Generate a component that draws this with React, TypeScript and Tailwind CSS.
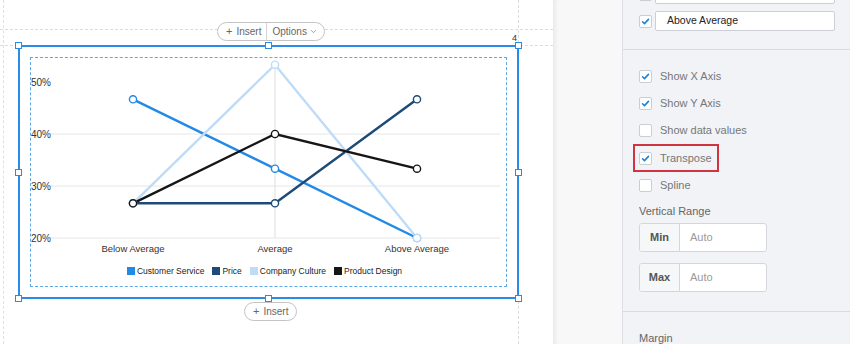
import React from 'react';
import { ChevronDown } from 'lucide-react';

const FONT = { fontFamily: '"Liberation Sans", Arial, sans-serif' };

const XS = [102, 244, 386];
const toY = (v: number) => 180 - (v - 20) * 5.2;

const SERIES = [
  { name: 'Customer Service', color: '#2389e6', values: [46.67, 33.33, 20] },
  { name: 'Price', color: '#1d4a76', values: [26.67, 26.67, 46.67] },
  { name: 'Company Culture', color: '#bedcf8', values: [26.67, 53.33, 20] },
  { name: 'Product Design', color: '#161616', values: [26.67, 40, 33.33] },
];

function Check() {
  return (
    <svg width="13" height="13" viewBox="0 0 13 13">
      <path d="M3 6.8 L5.3 9 L10 4" fill="none" stroke="#1b7fd6" strokeWidth="1.8" strokeLinecap="round" strokeLinejoin="round" />
    </svg>
  );
}

function Checkbox({ checked }: { checked?: boolean }) {
  return (
    <div className="w-[13px] h-[13px] shrink-0 rounded-[2px] border border-[#c9ced5] bg-white flex items-center justify-center">
      {checked && <Check />}
    </div>
  );
}

function Handle({ className }: { className: string }) {
  return <div className={`absolute w-[7px] h-[7px] bg-white border border-[#2a8be8] ${className}`} />;
}

function Chart() {
  return (
    <svg width="474" height="206" className="block">
      {[76, 128, 180].map((y) => (
        <line key={y} x1="19" x2="469" y1={y} y2={y} stroke="#e6e6e6" strokeWidth="1" />
      ))}
      <line x1="244" x2="244" y1="7" y2="180" stroke="#dedede" strokeWidth="1" />
      {[
        ['50%', 28],
        ['40%', 80],
        ['30%', 132],
        ['20%', 184],
      ].map(([t, y]) => (
        <text key={t as string} x="0" y={y as number} fontSize="10" fill="#333" style={FONT}>
          {t}
        </text>
      ))}
      {SERIES.map((s) => (
        <polyline
          key={s.name}
          points={s.values.map((v, i) => `${XS[i]},${toY(v)}`).join(' ')}
          fill="none"
          stroke={s.color}
          strokeWidth="2.4"
        />
      ))}
      {SERIES.map((s) =>
        s.values.map((v, i) => (
          <circle key={s.name + i} cx={XS[i]} cy={toY(v)} r="3.6" fill="#fff" stroke={s.color} strokeWidth="1.4" />
        ))
      )}
      {['Below Average', 'Average', 'Above Average'].map((t, i) => (
        <text key={t} x={XS[i]} y="194" fontSize="9.5" fill="#333" textAnchor="middle" style={FONT}>
          {t}
        </text>
      ))}
    </svg>
  );
}

function Canvas() {
  return (
    <div className="relative w-[553px] h-full bg-white shrink-0">
      {/* guides */}
      <div className="absolute left-[3px] top-0 bottom-0 border-l border-dashed border-[#e0e0e0]" />
      <div className="absolute left-[518px] top-0 bottom-0 border-l border-dashed border-[#dcdcdc]" />
      <div className="absolute left-0 right-0 top-[29px] border-t border-dashed border-[#dcdcdc]" />
      <div className="absolute left-0 right-0 top-[45px] border-t border-dashed border-[#dcdcdc]" />

      <div className="pt-[45px] pl-[18px]">
        <div className="relative w-[501px] h-[254px] border-2 border-[#2a8be8] px-[10px] pt-[10px]">
          <div className="h-[230px] border border-dashed border-[#5fa8e6] flex flex-col">
            <Chart />
            <div className="flex justify-center items-center gap-[8px] pr-[8px] h-[14px] text-[8.5px] text-[#222]">
              {SERIES.map((s) => (
                <div key={s.name} className="flex items-center gap-[2px]">
                  <span className="w-[8px] h-[8px] inline-block" style={{ backgroundColor: s.color }} />
                  <span>{s.name}</span>
                </div>
              ))}
            </div>
          </div>

          <Handle className="-left-[5px] -top-[5px]" />
          <Handle className="left-[245px] -top-[5px]" />
          <Handle className="-right-[5px] -top-[5px]" />
          <Handle className="-left-[5px] top-[122px]" />
          <Handle className="-right-[5px] top-[122px]" />
          <Handle className="-left-[5px] -bottom-[5px]" />
          <Handle className="left-[245px] -bottom-[5px]" />
          <Handle className="-right-[5px] -bottom-[5px]" />

          <span className="absolute right-0 -top-[14px] text-[9px] leading-[10px] text-[#333]">4</span>

          <div className="absolute left-[197px] -top-[25px] h-[19px] flex items-center rounded-full border border-[#c4c4c4] bg-white text-[10px] text-[#666]">
            <div className="flex items-center gap-[4px] pl-[8px] pr-[5px] h-full">
              <span className="text-[11px] leading-none">+</span>
              <span>Insert</span>
            </div>
            <div className="flex items-center gap-[2px] pl-[5px] pr-[6px] h-full border-l border-[#d4d4d4]">
              <span>Options</span>
              <ChevronDown size={9} strokeWidth={1.6} />
            </div>
          </div>

          <div className="absolute left-[224px] top-[255px] h-[19px] flex items-center gap-[4px] px-[8px] rounded-full border border-[#c4c4c4] bg-white text-[10px] text-[#666]">
            <span className="text-[11px] leading-none">+</span>
            <span>Insert</span>
          </div>
        </div>
      </div>
    </div>
  );
}

function CheckRow({ label, checked }: { label: string; checked?: boolean }) {
  return (
    <div className="h-[27px] flex items-center gap-[8px]">
      <Checkbox checked={checked} />
      <span className="text-[11px] text-[#777]">{label}</span>
    </div>
  );
}

function RangeInput({ label }: { label: string }) {
  return (
    <div className="w-[128px] h-[29px] flex rounded-[3px] border border-[#d3d7dd] bg-white overflow-hidden">
      <div className="w-[40px] flex items-center justify-center bg-[#f6f7f9] border-r border-[#d3d7dd] text-[11px] text-[#555] font-semibold">
        {label}
      </div>
      <div className="flex items-center pl-[10px] text-[11px] text-[#9a9a9a]">Auto</div>
    </div>
  );
}

function Sidebar() {
  return (
    <div className="flex-1 h-full bg-[#f1f3f6] border-l border-[#dcdfe4] overflow-hidden flex flex-col">
      <div className="-mt-[16px] pl-[16px] pb-[18px] flex flex-col gap-[7px] border-b border-[#d8dbe0]">
        {['Average', 'Above Average'].map((t) => (
          <div key={t} className="flex items-center gap-[3px]">
            <Checkbox checked />
            <div className="w-[180px] h-[20px] flex items-center px-[11px] rounded-[2px] border border-[#ccd0d6] bg-white text-[10.5px] text-[#222]">
              {t}
            </div>
          </div>
        ))}
      </div>

      <div className="pl-[16px] pt-[13px] pb-[19px] border-b border-[#d8dbe0] flex flex-col">
        <CheckRow label="Show X Axis" checked />
        <CheckRow label="Show Y Axis" checked />
        <CheckRow label="Show data values" />
        <div className="-ml-[6px] pl-[4px] pr-[5px] w-fit h-[28px] border-2 border-[#cf3440] flex items-center gap-[8px]">
          <Checkbox checked />
          <span className="text-[11px] text-[#777]">Transpose</span>
        </div>
        <CheckRow label="Spline" />
        <div className="mt-[4px] leading-[16px] text-[11px] text-[#666]">Vertical Range</div>
        <div className="mt-[4px] flex flex-col gap-[11px]">
          <RangeInput label="Min" />
          <RangeInput label="Max" />
        </div>
      </div>

      <div className="pl-[16px] pt-[18px] leading-[16px] text-[11px] text-[#666]">Margin</div>
    </div>
  );
}

export default function App() {
  return (
    <div className="w-[850px] h-[344px] flex overflow-hidden" style={FONT}>
      <Canvas />
      <div className="w-[69px] h-full shrink-0 bg-[#f8f8f8] shadow-[inset_5px_0_5px_-3px_rgba(0,0,0,0.07)]" />
      <Sidebar />
    </div>
  );
}
